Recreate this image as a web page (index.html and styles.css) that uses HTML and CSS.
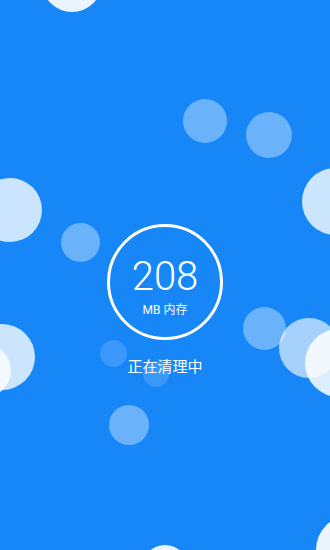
FILE: index.html
```html
<!DOCTYPE html>
<html lang="zh-CN">
<head>
  <meta charset="UTF-8">
  <meta name="viewport" content="width=device-width, initial-scale=1.0">
  <title>内存清理</title>
  <link rel="stylesheet" href="styles.css">
</head>
<body>

  <div class="screen">
    <!-- floating bubbles -->
    <div class="bubble solid" style="left: 42px; top: -48px; width: 60px; height: 60px;"></div>
    <div class="bubble mid" style="left: 183px; top: 99px; width: 44px; height: 44px;"></div>
    <div class="bubble mid" style="left: 246px; top: 112px; width: 46px; height: 46px;"></div>
    <div class="bubble light" style="left: -22px; top: 178px; width: 64px; height: 64px;"></div>
    <div class="bubble light" style="left: 302px; top: 168px; width: 67px; height: 67px;"></div>
    <div class="bubble mid" style="left: 61px; top: 223px; width: 39px; height: 39px;"></div>
    <div class="bubble faint" style="left: 100px; top: 340px; width: 27px; height: 27px;"></div>
    <div class="bubble faint" style="left: 143px; top: 361px; width: 26px; height: 26px;"></div>
    <div class="bubble light" style="left: -31px; top: 324px; width: 66px; height: 66px;"></div>
    <div class="bubble solid" style="left: -42px; top: 344px; width: 53px; height: 53px;"></div>
    <div class="bubble mid" style="left: 243px; top: 307px; width: 43px; height: 43px;"></div>
    <div class="bubble soft" style="left: 279px; top: 318px; width: 60px; height: 60px;"></div>
    <div class="bubble glass" style="left: 305px; top: 329px; width: 68px; height: 68px;"></div>
    <div class="bubble mid" style="left: 109px; top: 405px; width: 40px; height: 40px;"></div>
    <div class="bubble solid" style="left: 142px; top: 545px; width: 46px; height: 46px;"></div>
    <div class="bubble solid" style="left: 316px; top: 515px; width: 70px; height: 70px;"></div>

    <!-- memory ring -->
    <div class="ring">
      <div class="ring-num">208</div>
      <div class="ring-unit">MB 内存</div>
    </div>

    <div class="status">正在清理中</div>
  </div>

</body>
</html>
```

FILE: styles.css
```css
body {
  margin: 0;
  font-family: Roboto, "Noto Sans CJK SC", sans-serif;
  background-color: #1787f8;
}

.screen {
  position: relative;
  width: 330px;
  height: 550px;
  overflow: hidden;
  background-color: #1787f8;
  display: flex;
  flex-direction: column;
  align-items: center;
  padding-top: 224px;
  box-sizing: border-box;
}

/* Bubbles */
.bubble {
  position: absolute;
  border-radius: 50%;
}

.bubble.solid {
  background-color: rgba(245, 250, 255, 0.96);
}

.bubble.light {
  background-color: rgba(255, 255, 255, 0.78);
}

.bubble.soft {
  background-color: rgba(255, 255, 255, 0.62);
}

.bubble.glass {
  background-color: rgba(255, 255, 255, 0.85);
}

.bubble.mid {
  background-color: rgba(255, 255, 255, 0.36);
}

.bubble.faint {
  background-color: rgba(255, 255, 255, 0.15);
}

/* Ring */
.ring {
  position: relative;
  width: 116px;
  height: 116px;
  border: 3px solid #ffffff;
  border-radius: 50%;
  box-sizing: border-box;
  display: flex;
  flex-direction: column;
  align-items: center;
  padding-top: 30px;
  color: #ffffff;
}

.ring-num {
  font-size: 40px;
  line-height: 40px;
  font-weight: 300;
}

.ring-unit {
  margin-top: 5px;
  font-size: 12px;
  line-height: 16px;
}

.status {
  position: relative;
  margin-top: 16px;
  font-family: "Noto Sans CJK SC", sans-serif;
  font-size: 15px;
  line-height: 20px;
  color: #ffffff;
}
```
